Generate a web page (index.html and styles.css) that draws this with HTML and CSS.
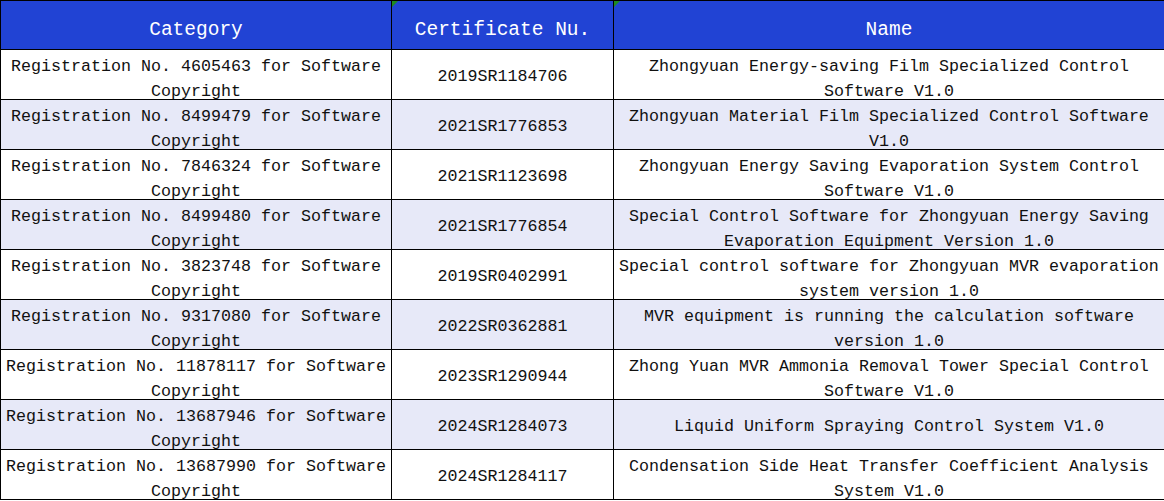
FILE: index.html
```html
<!DOCTYPE html>
<html>
<head>
<meta charset="utf-8">
<link rel="stylesheet" href="styles.css">
</head>
<body>
<table class="cert-table">
  <colgroup>
    <col class="c1">
    <col class="c2">
    <col class="c3">
  </colgroup>
  <thead>
    <tr>
      <th>Category</th>
      <th class="flag">Certificate Nu.</th>
      <th class="flag">Name</th>
    </tr>
  </thead>
  <tbody>
    <tr><td><div class="cell">Registration No. 4605463 for Software Copyright</div></td><td><div class="cell">2019SR1184706</div></td><td><div class="cell">Zhongyuan Energy-saving Film Specialized Control Software V1.0</div></td></tr>
    <tr class="alt"><td><div class="cell">Registration No. 8499479 for Software Copyright</div></td><td><div class="cell">2021SR1776853</div></td><td><div class="cell">Zhongyuan Material Film Specialized Control Software V1.0</div></td></tr>
    <tr><td><div class="cell">Registration No. 7846324 for Software Copyright</div></td><td><div class="cell">2021SR1123698</div></td><td><div class="cell">Zhongyuan Energy Saving Evaporation System Control Software V1.0</div></td></tr>
    <tr class="alt"><td><div class="cell">Registration No. 8499480 for Software Copyright</div></td><td><div class="cell">2021SR1776854</div></td><td><div class="cell">Special Control Software for Zhongyuan Energy Saving Evaporation Equipment Version 1.0</div></td></tr>
    <tr><td><div class="cell">Registration No. 3823748 for Software Copyright</div></td><td><div class="cell">2019SR0402991</div></td><td><div class="cell">Special control software for Zhongyuan MVR evaporation system version 1.0</div></td></tr>
    <tr class="alt"><td><div class="cell">Registration No. 9317080 for Software Copyright</div></td><td><div class="cell">2022SR0362881</div></td><td><div class="cell">MVR equipment is running the calculation software version 1.0</div></td></tr>
    <tr><td><div class="cell">Registration No. 11878117 for Software Copyright</div></td><td><div class="cell">2023SR1290944</div></td><td><div class="cell">Zhong Yuan MVR Ammonia Removal Tower Special Control Software V1.0</div></td></tr>
    <tr class="alt"><td><div class="cell">Registration No. 13687946 for Software Copyright</div></td><td><div class="cell">2024SR1284073</div></td><td><div class="cell">Liquid Uniform Spraying Control System V1.0</div></td></tr>
    <tr><td><div class="cell">Registration No. 13687990 for Software Copyright</div></td><td><div class="cell">2024SR1284117</div></td><td><div class="cell">Condensation Side Heat Transfer Coefficient Analysis System V1.0</div></td></tr>
  </tbody>
</table>
</body>
</html>
```

FILE: styles.css
```css
html, body {
  margin: 0;
  padding: 0;
  background: #ffffff;
}

.cert-table {
  border-collapse: collapse;
  width: 1164px;
  table-layout: fixed;
  font-family: "Liberation Mono", "DejaVu Sans Mono", monospace;
}

.c1 { width: 391px; }
.c2 { width: 222px; }
.c3 { width: 551px; }

.cert-table th,
.cert-table td {
  border: 1px solid #000;
  text-align: center;
  vertical-align: middle;
  padding: 0;
  overflow: hidden;
}

.cert-table th {
  background: #2143d4;
  color: #ffffff;
  font-weight: normal;
  font-size: 19.5px;
  height: 49px;
  line-height: 24px;
  padding-top: 10px;
  box-sizing: border-box;
  position: relative;
}

.cert-table th.flag::before {
  content: "";
  position: absolute;
  left: 0;
  top: 0;
  width: 0;
  height: 0;
  border-top: 6px solid #1f8a1f;
  border-right: 6px solid transparent;
}

.cert-table td {
  font-size: 16.667px;
  line-height: 25px;
  height: 49px;
  color: #111;
  background: #ffffff;
}

.cell {
  height: 49px;
  box-sizing: border-box;
  padding: 4px 2px 0;
  display: flex;
  justify-content: center;
  align-items: center;
  align-items: safe center;
  text-align: center;
}

.cert-table tr.alt td {
  background: #e7e9f8;
}
```
